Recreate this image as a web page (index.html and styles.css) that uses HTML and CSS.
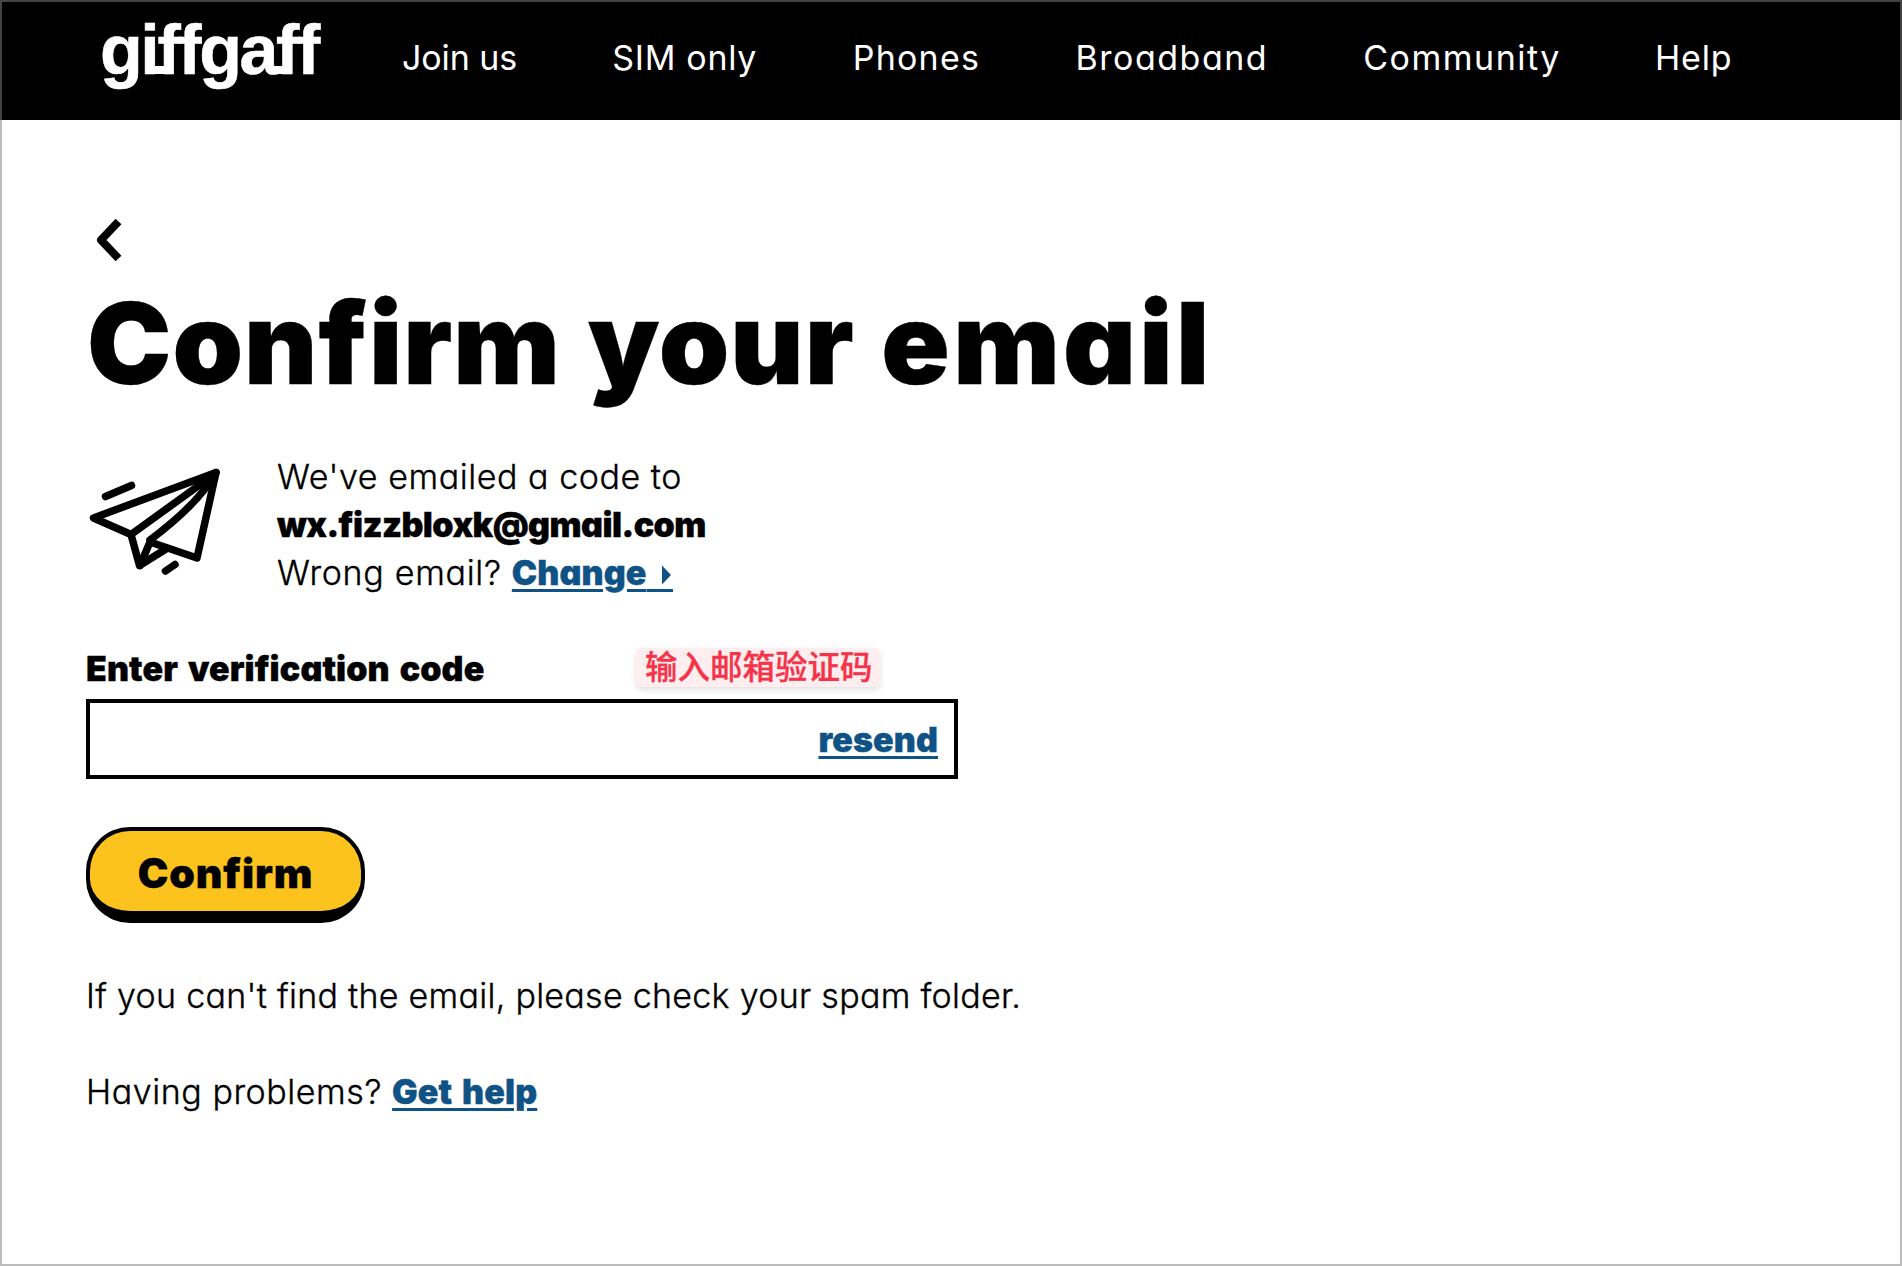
FILE: index.html
```html
<!DOCTYPE html>
<html lang="en">
<head>
<meta charset="utf-8">
<title>Confirm your email</title>
<link rel="stylesheet" href="styles.css">
</head>
<body>
<header class="header">
  <a class="logo">giffgaff</a>
  <nav class="nav">
    <a class="nav-join">Join us</a>
    <a class="nav-sim">SIM only</a>
    <a class="nav-phones">Phones</a>
    <a class="nav-broadband">Broadband</a>
    <a class="nav-community">Community</a>
    <a class="nav-help">Help</a>
  </nav>
</header>
<main class="main">
  <a class="back"><svg width="28" height="44" viewBox="0 0 28 44"><path d="M24.500 3.500 7 22 24.500 40.500" fill="none" stroke="#000" stroke-width="8" stroke-linejoin="round"/></svg></a>
  <h1 class="title">Confirm your <span class="title-end">email</span></h1>
  <section class="sent">
    <svg class="plane" width="140" height="120" viewBox="0 0 140 120" fill="none" stroke="#000" stroke-width="7.500" stroke-linecap="round" stroke-linejoin="round">
      <path d="M130 16.500 7.500 62 45 78.500 53.500 109.500 80 93"/>
      <path d="M130 16.500 111 102 64 86 54 109.500"/>
      <path d="M45 78.500 126 20"/>
      <path d="M64 84Q112 48 129 18"/>
      <path d="M19.500 40.500 45.500 29.500M79.500 115 89 108.500"/>
    </svg>
    <div class="sent-text">
      <p>We've emailed a code to</p>
      <p class="address">wx.fizzbloxk@gmail.com</p>
      <p><span class="question">Wrong email?</span> <a class="link">Change<svg class="arrow" width="26" height="24" viewBox="0 0 26 24" fill="currentColor"><path d="M15 4.500 24 14 15 23.500Z"/><path d="M0 28H26V31H0Z"/></svg></a></p>
    </div>
  </section>
  <div class="label-row"><label class="label" for="code">Enter verification code</label><span class="hint">输入邮箱验证码</span></div>
  <div class="field"><input class="code" id="code" type="text"><a class="link">resend</a></div>
  <button class="confirm">Confirm</button>
  <p class="note spam">If you can't find the email, please check your spam folder.</p>
  <p class="note">Having problems? <a class="link">Get help</a></p>
</main>
</body>
</html>
```
FILE: styles.css
```css
* { box-sizing: border-box; margin: 0; padding: 0; }

body {
  height: 1266px;
  overflow: hidden;
  background: #fff;
  color: #000;
  font: 300 34px/48px Inter, "Noto Sans CJK SC", sans-serif;
  font-feature-settings: "cv11";
  letter-spacing: 0.55px;
  -webkit-text-stroke: 0.35px currentColor;
}

/* Window frame, drawn over the header and the page */
body::after {
  content: "";
  position: fixed;
  inset: 0;
  border: 2px solid rgba(128, 128, 128, 0.53);
  pointer-events: none;
}

.header { display: flex; height: 120px; background: #000; color: #fff; padding-left: 100px; -webkit-text-stroke: 0; }

.logo {
  position: relative;
  width: 302px;
  padding-top: 10px;
  font: bold 70px/80px "Liberation Sans", sans-serif;
  letter-spacing: -2.4px;
  -webkit-text-stroke: 0.6px #fff;
}

/* Strokes that join i to f and a to f along the baseline */
.logo::before,
.logo::after { content: ""; position: absolute; top: 66px; height: 8px; background: #fff; }
.logo::before { left: 46px; width: 24px; }
.logo::after { left: 172px; width: 18px; }

.nav {
  display: grid;
  grid-template-columns: 210.3px 240.5px 222.8px 287.7px 291.7px auto;
  padding-top: 34px;
  font-weight: 400;
}
.nav-join { letter-spacing: -0.1px; }
.nav-sim { letter-spacing: 0.7px; }
.nav-phones { letter-spacing: 1.2px; }
.nav-broadband { letter-spacing: 1.5px; }
.nav-community { letter-spacing: 1.5px; }
.nav-help { letter-spacing: 0.8px; }

.main { padding: 98px 86px 0; }
.back { display: block; height: 65px; padding-left: 8px; }

.title {
  padding-left: 1px;
  font-size: 113px;
  line-height: 120px;
  font-weight: 900;
  letter-spacing: 1px;
  word-spacing: 3.2px;
  white-space: nowrap;
}
.title-end { letter-spacing: 3.3px; }

.sent { display: flex; gap: 51px; margin-top: 49px; height: 144px; }
.plane { margin-top: 4px; }
.sent-text { padding-top: 1px; }
.address { font-weight: 900; letter-spacing: -0.55px; }
.question { letter-spacing: 0.7px; }
.arrow { overflow: visible; }

.link {
  font-weight: 900;
  color: #0f5286;
  letter-spacing: 0.1px;
  word-spacing: 3px;
  text-decoration: underline 3px;
  text-underline-offset: 4px;
}

.label-row { display: flex; gap: 149px; margin-top: 48px; height: 55px; }
.label { width: 401px; padding-top: 1px; font-weight: 900; letter-spacing: 0.1px; word-spacing: 3px; white-space: nowrap; }
.hint {
  width: 244px;
  height: 39px;
  margin-top: 4px;
  padding-left: 9px;
  border-radius: 6px;
  background: #ffeef0;
  color: #f5344a;
  box-shadow: 0 3px 6px rgba(0, 0, 0, 0.12);
  font: 500 32.5px/33px "Noto Sans CJK SC", sans-serif;
  letter-spacing: 0;
  -webkit-text-stroke: 0.3px #f5344a;
}

.field {
  display: flex;
  align-items: center;
  width: 872px;
  height: 80px;
  padding: 2px 16px 0 0;
  border: 4px solid #000;
}
.code { flex: 1; min-width: 0; height: 64px; padding: 0 16px; border: 0; outline: 0; font: inherit; }

.confirm {
  display: block;
  width: 279px;
  height: 96px;
  margin-top: 48px;
  padding-top: 3px;
  border: 4px solid #000;
  border-bottom-width: 12px;
  border-radius: 44px;
  background: #fcc31e;
  color: #000;
  font: 900 41px/48px Inter, sans-serif;
  font-feature-settings: "cv11";
  letter-spacing: 0.9px;
}

.note { margin-top: 48px; }
.spam { margin-top: 49px; letter-spacing: 0.28px; }
```
